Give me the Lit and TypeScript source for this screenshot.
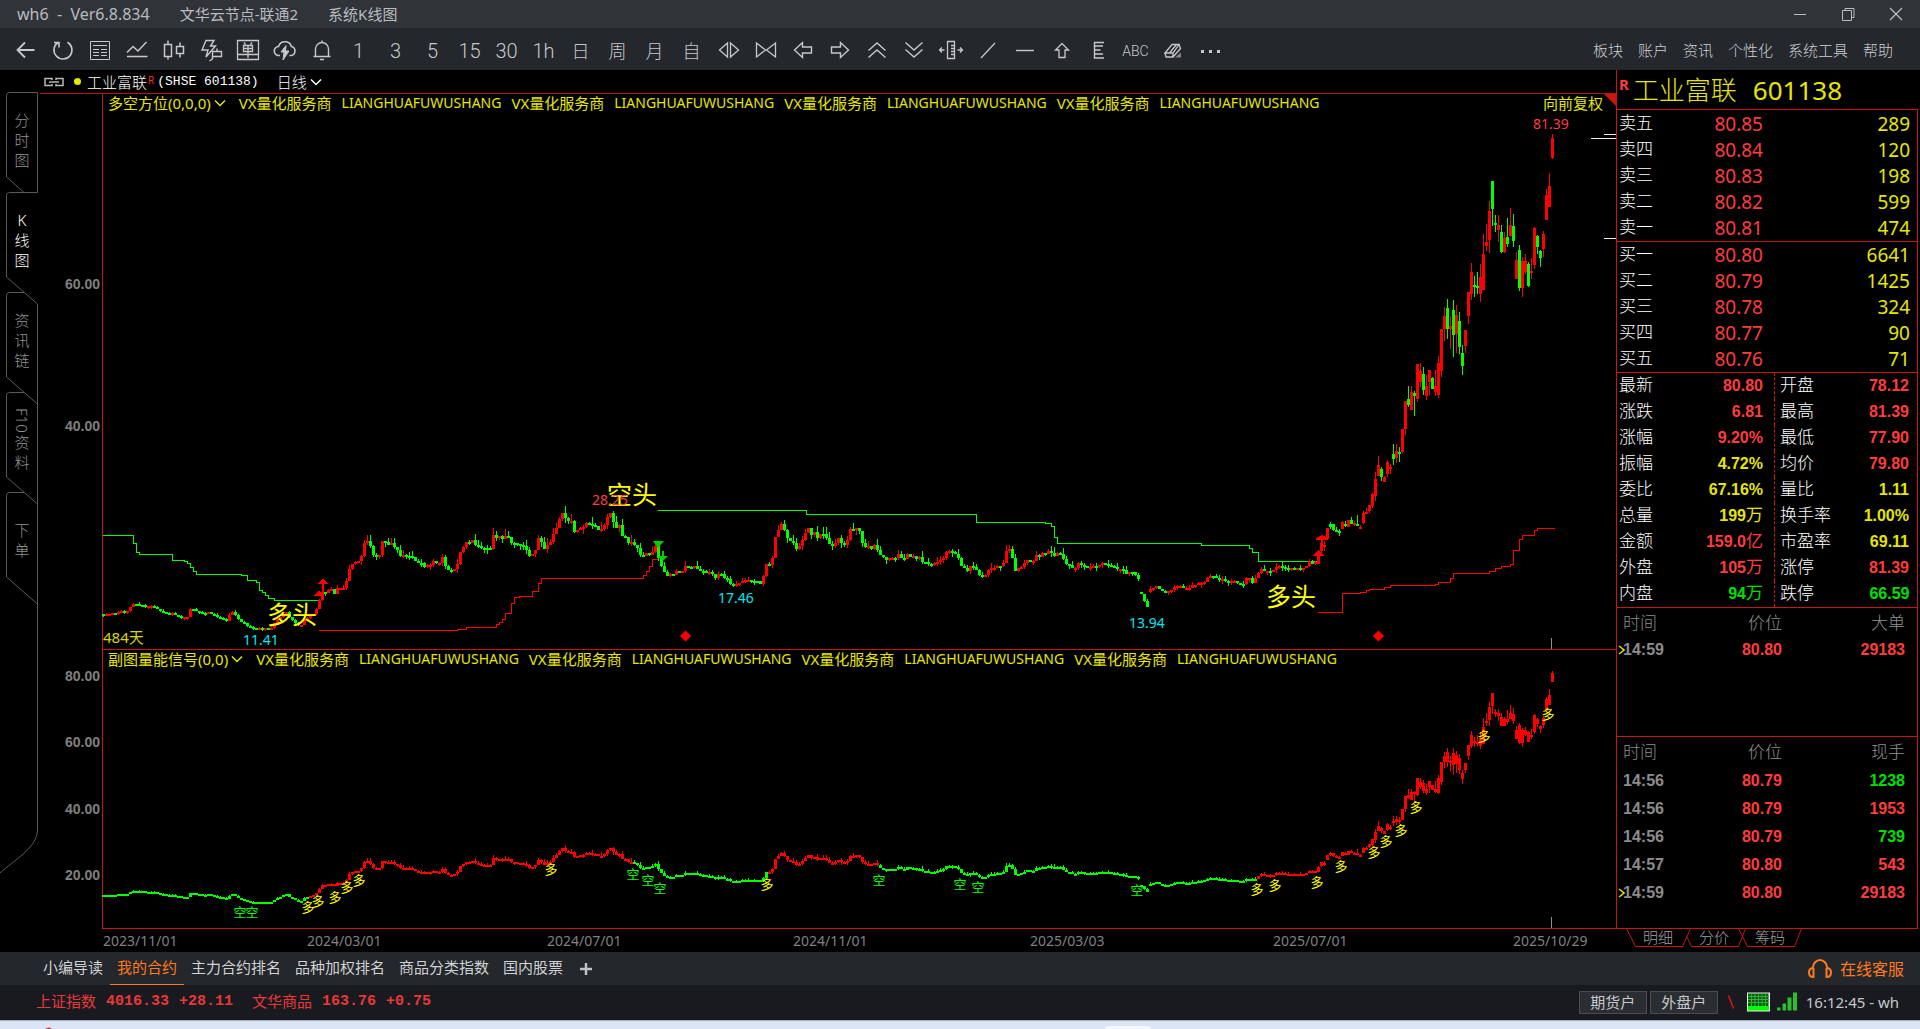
import { LitElement, html, svg, css, nothing } from "lit";
import { customElement, property } from "lit/decorators.js";
import { classMap } from "lit/directives/class-map.js";

/* ---------- chart data ---------- */

type Point = [number, number];
type Bar = { x: number; high: number; top: number; bottom: number; low: number; up: boolean };

/* Turning points of the daily price path, in plot coordinates. */
const PATH: Point[] = [
  [103, 614], [114, 614], [120, 611], [128, 610], [133, 603], [137, 604], [143, 605], [151, 606], [157, 609], [163, 613],
  [171, 613], [178, 616], [183, 618], [187, 617], [189, 608], [197, 612], [209, 613], [215, 616], [220, 618], [226, 621],
  [229, 615], [233, 612], [237, 619], [242, 623], [248, 626], [254, 628], [260, 628], [266, 629], [271, 629], [272, 624],
  [276, 620], [282, 615], [286, 613], [290, 618], [296, 625], [300, 626], [304, 620], [309, 617], [313, 614], [317, 608],
  [319, 600], [322, 593], [326, 593], [330, 588], [335, 594], [338, 586], [344, 588], [346, 582], [349, 570], [352, 562],
  [357, 561], [362, 555], [364, 543], [368, 538], [371, 547], [374, 558], [379, 553], [382, 540], [386, 540], [394, 547],
  [400, 557], [406, 556], [412, 555], [418, 563], [425, 568], [431, 562], [436, 563], [442, 558], [446, 566], [449, 575],
  [453, 568], [457, 563], [460, 550], [464, 545], [470, 542], [475, 545], [481, 550], [489, 549], [493, 538], [501, 536],
  [507, 538], [511, 543], [517, 546], [523, 548], [528, 555], [535, 552], [539, 537], [543, 547], [549, 546], [553, 532],
  [558, 523], [562, 515], [567, 518], [572, 525], [575, 532], [581, 529], [586, 523], [592, 526], [600, 529], [605, 520],
  [609, 512], [613, 525], [618, 527], [622, 533], [626, 542], [634, 542], [640, 555], [646, 553], [651, 555], [655, 547],
  [658, 557], [661, 567], [663, 573], [670, 576], [675, 573], [685, 568], [693, 567], [703, 570], [712, 575], [716, 580],
  [719, 573], [724, 577], [730, 583], [737, 585], [741, 582], [747, 578], [753, 582], [760, 583], [763, 575], [766, 564],
  [770, 563], [773, 557], [775, 540], [778, 527], [781, 525], [784, 532], [788, 539], [793, 540], [796, 548], [801, 545],
  [804, 537], [806, 527], [811, 532], [817, 535], [824, 537], [830, 543], [833, 546], [838, 541], [844, 543], [848, 537],
  [851, 530], [856, 528], [859, 532], [863, 542], [867, 549], [873, 547], [879, 552], [882, 559], [890, 559], [898, 556],
  [904, 559], [908, 556], [915, 557], [920, 559], [925, 564], [928, 566], [934, 562], [941, 559], [945, 553], [951, 552],
  [957, 557], [961, 566], [966, 570], [973, 567], [978, 572], [983, 576], [989, 570], [996, 567], [1002, 566], [1004, 557],
  [1007, 548], [1010, 553], [1013, 563], [1016, 573], [1020, 568], [1023, 562], [1032, 559], [1040, 555], [1046, 552],
  [1054, 553], [1062, 555], [1066, 564], [1072, 568], [1079, 564], [1087, 567], [1095, 566], [1100, 563], [1109, 567],
  [1117, 569], [1125, 573], [1135, 574], [1138, 577], [1141, 593], [1144, 602], [1147, 607], [1150, 589], [1157, 587],
  [1162, 590], [1168, 592], [1176, 587], [1190, 587], [1196, 583], [1202, 582], [1210, 577], [1218, 578], [1226, 581],
  [1238, 582], [1242, 584], [1248, 578], [1253, 583], [1257, 575], [1259, 570], [1267, 571], [1275, 568], [1281, 565],
  [1289, 567], [1296, 571], [1301, 567], [1309, 563], [1317, 564],
];

/* Days that open away from the previous close. */
const GAPS = new Set([1141, 1150]);

/* Latest bars: high, body top, body bottom, low, rising (1) or falling (0). */
const RECENT: [number, number, number, number, number][] = [
  [552, 554, 564, 564, 1], [543, 543, 551, 553, 1], [541, 545, 546, 551, 1], [528, 528, 539, 539, 1], [522, 524, 527, 529, 0],
  [524, 524, 530, 531, 0], [527, 530, 531, 532, 0], [529, 531, 532, 536, 0], [521, 522, 529, 529, 1], [521, 524, 526, 527, 0],
  [520, 520, 527, 527, 1], [517, 520, 524, 524, 0], [521, 523, 524, 526, 1], [515, 524, 525, 526, 0], [525, 527, 528, 529, 1],
  [511, 513, 523, 524, 1], [508, 512, 513, 514, 1], [505, 505, 511, 513, 1], [493, 494, 506, 508, 1], [472, 479, 496, 501, 1],
  [456, 465, 476, 476, 1], [467, 469, 477, 481, 0], [476, 477, 482, 482, 1], [460, 462, 474, 477, 1], [464, 467, 469, 474, 1],
  [444, 454, 459, 465, 0], [444, 451, 458, 463, 1], [447, 452, 454, 462, 0], [429, 429, 452, 453, 1], [401, 401, 429, 435, 1],
  [386, 399, 405, 407, 0], [386, 392, 410, 410, 1], [391, 393, 396, 416, 0], [364, 364, 399, 402, 1], [363, 371, 382, 387, 1],
  [367, 374, 390, 395, 0], [375, 386, 396, 400, 1], [370, 370, 382, 395, 1], [377, 378, 389, 389, 0], [370, 386, 392, 396, 1],
  [356, 363, 395, 398, 1], [329, 329, 371, 377, 1], [307, 316, 329, 341, 1], [299, 308, 329, 339, 0], [316, 326, 329, 349, 1],
  [300, 310, 335, 357, 0], [305, 315, 334, 353, 1], [312, 321, 347, 354, 0], [345, 353, 366, 375, 0], [330, 330, 346, 353, 1],
  [292, 292, 316, 324, 1], [263, 272, 294, 300, 1], [276, 285, 287, 297, 0], [272, 286, 288, 294, 0], [264, 277, 294, 302, 1],
  [234, 254, 290, 290, 1], [224, 242, 246, 251, 1], [201, 211, 240, 253, 1], [181, 181, 209, 226, 0], [215, 223, 225, 232, 0],
  [215, 225, 230, 242, 1], [225, 232, 252, 253, 0], [232, 238, 252, 253, 1], [218, 237, 244, 247, 0], [208, 225, 236, 237, 1],
  [214, 226, 241, 247, 0], [252, 260, 279, 279, 1], [245, 250, 288, 291, 0], [257, 261, 288, 297, 1], [254, 261, 272, 274, 1],
  [262, 264, 286, 287, 0], [258, 271, 273, 279, 1], [227, 228, 265, 269, 1], [235, 236, 247, 254, 0], [250, 251, 258, 267, 0],
  [231, 234, 249, 257, 1], [189, 195, 220, 220, 1], [173, 186, 207, 207, 1], [134, 138, 158, 159, 1],
];

const levelAt = (x: number): number => {
  for (let k = 1; k < PATH.length; k++) {
    if (x <= PATH[k][0]) {
      const [ax, ay] = PATH[k - 1];
      const [bx, by] = PATH[k];
      return ay + ((by - ay) * (x - ax)) / (bx - ax);
    }
  }
  return PATH[PATH.length - 1][1];
};

const noise = (n: number): number => {
  const v = Math.sin(n * 127.1 + 11.7) * 43758.5453;
  return v - Math.floor(v);
};

function buildBars(): Bar[] {
  const bars: Bar[] = [];
  let open = PATH[0][1];
  for (let i = 0; i < 405; i++) {
    const x = 103 + i * 3;
    const level = levelAt(x);
    const swing = Math.max(1, (632 - level) / 22);
    const close = level + (noise(i) - 0.5) * swing * 1.5;
    if (GAPS.has(x)) open = close + (close > open ? -2 : 3);
    const top = Math.round(Math.min(open, close));
    const bottom = Math.max(top + 2, Math.round(Math.max(open, close)));
    bars.push({
      x,
      top,
      bottom,
      high: Math.round(top - noise(i + 900) ** 2 * swing * 1.8),
      low: Math.round(bottom + noise(i + 1800) ** 2 * swing * 1.2),
      up: close < open,
    });
    open = close;
  }
  RECENT.forEach(([high, top, bottom, low, up], k) => {
    bars.push({ x: 1318 + k * 3, high, top, bottom: Math.max(bottom, top + 2), low, up: up === 1 });
  });
  return bars;
}

const BARS = buildBars();
const toLower = (y: number): number => Math.round(675 + (y - 143) * 0.468);
const LOWER_BARS = BARS.map((b) => {
  const top = toLower(b.top);
  return { ...b, high: toLower(b.high), top, bottom: Math.max(top + 2, toLower(b.bottom)), low: toLower(b.low) };
});
const isRising = (x: number): boolean => (x > 308 && x < 634) || (x > 767 && x < 878) || x > 1256;

const barPath = (bars: Bar[]): string =>
  bars
    .map((b) => `M${b.x} ${b.high}h1V${b.low}h-1zM${b.x - 1} ${b.top}h3V${b.bottom}h-3z`)
    .join("");

/* A step line: hold the level to x, then move to the next one. */
const stepPath = ([first, ...rest]: Point[]): string =>
  `M${first[0]} ${first[1]}` + rest.map(([x, y]) => `H${x}V${y}`).join("");

const GREEN_STEPS: Point[][] = [
  [[103, 535], [133, 543], [136, 552], [139, 554], [172, 560], [184, 561], [187, 563], [190, 567], [193, 571], [196, 574],
    [241, 575], [247, 580], [256, 582], [259, 590], [262, 592], [265, 595], [268, 598], [274, 600], [319, 600]],
  [[658, 510], [806, 514], [976, 522], [1045, 523], [1051, 526], [1054, 537], [1057, 543], [1201, 545], [1249, 548],
    [1252, 552], [1258, 561], [1318, 561]],
];
const RED_STEPS: Point[][] = [
  [[319, 630], [457, 629], [466, 627], [496, 624], [499, 622], [502, 619], [505, 613], [511, 603], [514, 597], [519, 596],
    [532, 591], [538, 583], [541, 578], [643, 575], [646, 571], [649, 566], [652, 559], [658, 559]],
  [[1318, 612], [1342, 593], [1360, 592], [1366, 590], [1369, 589], [1384, 587], [1390, 585], [1435, 584], [1438, 582],
    [1450, 578], [1453, 573], [1489, 571], [1495, 568], [1501, 566], [1510, 564], [1513, 550], [1519, 539], [1522, 535],
    [1534, 530], [1537, 528], [1555, 528]],
];

const LONG_MARKS: Point[] = [
  [308, 907], [318, 901], [335, 897], [347, 887], [359, 880], [551, 869], [767, 884], [1257, 889], [1275, 885], [1317, 882],
  [1341, 866], [1374, 852], [1386, 841], [1401, 830], [1416, 807], [1484, 736], [1548, 714],
];
const SHORT_MARKS: Point[] = [
  [240, 912], [252, 912], [633, 874], [648, 880], [660, 888], [879, 880], [960, 884], [978, 887], [1137, 890],
];

/* ---------- toolbar icons, 24 × 24 ---------- */

const icon = (body: unknown, w = 24) =>
  html`<svg class="icon" width=${w} height="24" viewBox="0 0 ${w} 24" aria-hidden="true">${body}</svg>`;

const TOOLS: { label: string; icon?: unknown; text?: string; small?: boolean; cjk?: boolean }[] = [
  { label: "返回", icon: icon(svg`<path d="M20.500 12H4M11 4.500L3.500 12l7.500 7.500" stroke-width="1.800"/>`) },
  { label: "刷新", icon: icon(svg`<path d="M7 4.500A9 9 0 1 0 16.500 4.200M3 4.500h5v5" stroke-width="1.600"/>`) },
  { label: "报价", icon: icon(svg`<path d="M2.500 3.500h19v18h-19zM5 7.500h14M5 11.500h6M13 11.500h6M5 14.500h6M13 14.500h6M5 17.500h6M13 17.500h6"/>`) },
  { label: "分时", icon: icon(svg`<path d="M2 14.500l6-6 5 4.500 8.500-9M2 18.500h20.500" stroke-width="1.500"/>`) },
  { label: "K线", icon: icon(svg`<path d="M2.500 6.500h7v12h-7zM6 2.500v4M6 18.500v3M14.500 8.500h7v7h-7zM18 4.500v4M18 15.500v4" stroke-width="1.500"/>`) },
  { label: "闪电下单", icon: icon(svg`<path d="M7 2.500h8l-3.500 5.500h5L7 19l2-7H3zM13.500 13.500h9v5h-9zM13.500 13.500v7.500l-3 2M18 10.500v3" stroke-width="1.400"/>`) },
  { label: "下单", icon: icon(svg`<path d="M1.500 2.500h21v19h-21zM8 4.500l1.500 2M16 4.500l-1.500 2M7.500 7.500h9v6h-9zM7.500 10.500h9M12 7.500v12.500M1.500 16.500h21" stroke-width="1.300"/>`) },
  { label: "云服务", icon: icon(svg`<path d="M7 17.500H6a4.500 4.500 0 0 1-.5-9A6.800 6.800 0 0 1 18.500 8.500a4.600 4.600 0 0 1-.5 9h-1.500" stroke-width="1.600"/><path d="M13 7.500L8 14h3l-1 8 6-9h-3.500z" fill="currentColor"/>`) },
  { label: "预警", icon: icon(svg`<path d="M3.500 18.500h17M5.500 18V11a6.500 6.500 0 0 1 13 0v7M12 4.500V2.500M10 21.500h4" stroke-width="1.400"/>`) },
  { label: "1分钟", text: "1" },
  { label: "3分钟", text: "3" },
  { label: "5分钟", text: "5" },
  { label: "15分钟", text: "15" },
  { label: "30分钟", text: "30" },
  { label: "1小时", text: "1h" },
  { label: "日线", text: "日", cjk: true },
  { label: "周线", text: "周", cjk: true },
  { label: "月线", text: "月", cjk: true },
  { label: "自定义周期", text: "自", cjk: true },
  { label: "展开", icon: icon(svg`<path d="M10.500 5v14L2.500 12zM13.500 5v14l8-7z" stroke-width="1.300"/>`) },
  { label: "压缩", icon: icon(svg`<path d="M2.500 5v14l9-7zM21.500 5v14l-9-7z" stroke-width="1.300"/>`) },
  { label: "左移", icon: icon(svg`<path d="M3.500 12l8-7.500V9h9v6h-9v4.500z" stroke-width="1.400"/>`) },
  { label: "右移", icon: icon(svg`<path d="M20.500 12l-8-7.500V9h-9v6h9v4.500z" stroke-width="1.400"/>`) },
  { label: "放大", icon: icon(svg`<path d="M3.500 12.500L12 5l8.500 7.500M3.500 19.500L12 12l8.500 7.500" stroke-width="1.400"/>`) },
  { label: "缩小", icon: icon(svg`<path d="M3.500 4.500L12 12l8.500-7.500M3.500 11.500L12 19l8.500-7.500" stroke-width="1.400"/>`) },
  { label: "区间", icon: icon(svg`<path d="M9.500 3.500h7v17h-7zM13 7.500h3M13 10.500h3M13 13.500h3M13 16.500h3M1.500 12h5M19.500 12h5M4 9.500L1.500 12 4 14.500M22 9.500l2.500 2.500L22 14.500" stroke-width="1.300"/>`, 26) },
  { label: "画线", icon: icon(svg`<path d="M5 20L19 5" stroke-width="1.300"/>`) },
  { label: "水平线", icon: icon(svg`<path d="M3 12.500h18" stroke-width="1.400"/>`) },
  { label: "箭头", icon: icon(svg`<path d="M12 5.500l6.500 6.500H15v7.500H9V12H5.500z" stroke-width="1.300"/>`) },
  { label: "标尺", icon: icon(svg`<path d="M17 4.500H7.500v15.500H17M8 8h8M8 12h5.500M8 16h8" stroke-width="1.400"/>`) },
  { label: "文字", text: "ABC", small: true },
  { label: "擦除", icon: icon(svg`<path d="M4 15l7-8.500h7L12 15zM4 15l1 4h7l7.500-8.500L18 6.500M12 15v4M8.500 15l7-8.500" stroke-width="1.300"/><path d="M14 19.500h6v-5z" fill="currentColor" stroke="none" opacity=".6"/>`) },
  { label: "更多", icon: icon(svg`<path d="M3 13.500h3M11 13.500h3M19 13.500h3" stroke-width="3"/>`) },
];

const chevron = html`<svg class="chevron" width="12" height="8" viewBox="0 0 12 8" aria-hidden="true"><path d="M1 1.500l5 5 5-5"/></svg>`;

const latin = "LIANGHUAFUWUSHANG";
const vendor = "VX量化服务商";

/* ---------- chart area ---------- */

@customElement("kline-chart")
export class KlineChart extends LitElement {
  static styles = css`
    :host { display: block; min-width: 0; color: #e6e600; font-family: "Noto Sans", "Noto Sans CJK SC", sans-serif; }
    .head { display: flex; align-items: center; height: 23px; padding-left: 4px; border-bottom: 1px solid #b9130b; color: #fff; font-size: 15px; font-weight: 300; white-space: nowrap; }
    .dot { width: 7px; height: 7px; margin: 0 6px 0 10px; border-radius: 50%; background: #e6e600; }
    .mark { align-self: flex-start; margin: 3px 3px 0 1px; color: #f03030; font-size: 10px; font-weight: 400; line-height: 14px; }
    .code { margin-right: 18px; font-family: "Liberation Mono", monospace; font-size: 13px; }
    .drop { display: inline-flex; align-items: center; gap: 3px; padding: 0; border: 0; background: none; color: inherit; font-family: inherit; font-size: 15px; font-weight: inherit; line-height: 20px; }
    .title .drop { margin-right: 3px; }
    .chevron { flex: none; fill: none; stroke: currentColor; stroke-width: 1.5; }
    .pane { display: grid; }
    .pane > * { grid-area: 1 / 1; }
    .plot { display: block; width: 100%; height: auto; }
    .title { display: flex; align-items: center; align-self: start; gap: 10px; height: 18px; padding-left: 68px; font-size: 15px; white-space: nowrap; overflow: hidden; z-index: 1; line-height: 18px; }
    .latin { font-size: 14px; }
    .note { margin-left: auto; padding-right: 13px; }
    .frame { stroke: #c8170e; fill: none; shape-rendering: crispEdges; }
    .axis { fill: #808080; font: bold 14px "Liberation Sans", sans-serif; text-anchor: end; }
    .up { fill: #f00; shape-rendering: crispEdges; }
    .down { fill: #0f0; shape-rendering: crispEdges; }
    .res { fill: none; stroke: #0f0; shape-rendering: crispEdges; }
    .sup { fill: none; stroke: #f00; shape-rendering: crispEdges; }
    .sell { fill: #00d000; }
    .white { stroke: #eee; shape-rendering: crispEdges; }
    .tick { stroke: #909090; shape-rendering: crispEdges; }
    .corner { fill: #c8170e; }
    .value { font-size: 14px; text-anchor: middle; }
    .cyan { fill: #00e6f0; }
    .red { fill: #ff3c3c; }
    .days { font-size: 15px; fill: #d8d800; }
    .side { font-size: 25px; text-anchor: middle; fill: #ff0; }
    .long { font-size: 13px; text-anchor: middle; fill: #ff0; }
    .short { font-size: 13px; text-anchor: middle; fill: #0f0; }
    .dates { display: grid; grid-template-columns: 204fr 240fr 246fr 237fr 243fr 240fr 103fr; height: 23px; padding-left: 63px; color: #808080; font-size: 14px; line-height: 23px; white-space: nowrap; }
  `;

  private titleRow(name: string, note?: string) {
    return html`<div class="title">
      <button class="drop" type="button">${name}${chevron}</button>
      ${[0, 1, 2, 3].map(() => html`<span>${vendor}</span><span class="latin">${latin}</span>`)}
      ${note ? html`<span class="note">${note}</span>` : nothing}
    </div>`;
  }

  render() {
    return html`
      <div class="head">
        <svg width="20" height="10" viewBox="0 0 20 10" aria-hidden="true">
          <path d="M8 3V1.500H1v7h7V7M12 3V1.500h7v7h-7V7M5 5h10" fill="none" stroke="#b8b8b8" stroke-width="1.500" />
        </svg>
        <span class="dot"></span>
        <span>工业富联</span><span class="mark">R</span>
        <span class="code">(SHSE 601138)</span>
        <button class="drop" type="button">日线${chevron}</button>
      </div>
      <div class="pane">
        <svg class="plot" viewBox="40 94 1576 556" role="img" aria-label="日线">
          <path class="frame" d="M102.500 94V649.500M102 649.500H1616" />
          <text class="axis" x="100" y="289">60.00</text>
          <text class="axis" x="100" y="431">40.00</text>
          ${GREEN_STEPS.map((s) => svg`<path class="res" d=${stepPath(s)} />`)}
          ${RED_STEPS.map((s) => svg`<path class="sup" d=${stepPath(s)} />`)}
          <path class="up" d=${barPath(BARS.filter((b) => b.up))} />
          <path class="down" d=${barPath(BARS.filter((b) => !b.up))} />
          <path class="up" d="M323 579l5 4v1h-10v-1zM322 583h2v12h-2zM319 590l5 6h-10zM1322 535l6 3v2h-12v-2zM1321 538h2v10h-2zM1318 550l6 6h-12z" />
          <path class="sell" d="M653 541h11l-6 7zM662 551h2v5h4l-5 5-5-5h4z" />
          <path d="M685.500 630.500l5.500 5.500-5.500 5.500-5.500-5.500zM1378.500 630.500l5.500 5.500-5.500 5.500-5.500-5.500z" fill="#f00" />
          <path class="white" d="M1604 134.500h12M1591 138.500h25M1604 238.500h12" />
          <path class="tick" d="M1551.500 638v11" />
          <path class="corner" d="M1604 94h12v12z" />
          <text class="side" x="292" y="624">多头</text>
          <text class="side" x="632" y="504">空头</text>
          <text class="side" x="1291" y="606">多头</text>
          <text class="value red" x="610" y="505">28.25</text>
          <text class="value red" x="1551" y="129">81.39</text>
          <text class="value cyan" x="261" y="645">11.41</text>
          <text class="value cyan" x="736" y="603">17.46</text>
          <text class="value cyan" x="1147" y="628">13.94</text>
          <text class="days" x="103" y="643">484天</text>
        </svg>
        ${this.titleRow("多空方位(0,0,0)", "向前复权")}
      </div>
      <div class="pane">
        <svg class="plot" viewBox="40 650 1576 279" role="img" aria-label="副图量能信号">
          <path class="frame" d="M102.500 650V928.500M102 928.500H1616" />
          ${["80.00", "60.00", "40.00", "20.00"].map(
            (t, i) => svg`<text class="axis" x="100" y=${681 + Math.round(i * 66.3)}>${t}</text>`
          )}
          <path class="up" d=${barPath(LOWER_BARS.filter((b) => isRising(b.x)))} />
          <path class="down" d=${barPath(LOWER_BARS.filter((b) => !isRising(b.x)))} />
          ${LONG_MARKS.map(([x, y]) => svg`<text class="long" x=${x} y=${y + 5}>多</text>`)}
          ${SHORT_MARKS.map(([x, y]) => svg`<text class="short" x=${x} y=${y + 5}>空</text>`)}
          <path class="tick" d="M1551.500 917v11" />
        </svg>
        ${this.titleRow("副图量能信号(0,0)")}
      </div>
      <div class="dates">
        ${["2023/11/01", "2024/03/01", "2024/07/01", "2024/11/01", "2025/03/03", "2025/07/01", "2025/10/29"].map(
          (d) => html`<span>${d}</span>`
        )}
      </div>
    `;
  }
}

/* ---------- quote panel ---------- */

type Cell = [label: string, value: string, tone: string, unit?: string];

const ASKS = [["卖五", "80.85", "289"], ["卖四", "80.84", "120"], ["卖三", "80.83", "198"], ["卖二", "80.82", "599"], ["卖一", "80.81", "474"]];
const BIDS = [["买一", "80.80", "6641"], ["买二", "80.79", "1425"], ["买三", "80.78", "324"], ["买四", "80.77", "90"], ["买五", "80.76", "71"]];
const LEFT: Cell[] = [
  ["最新", "80.80", "red"], ["涨跌", "6.81", "red"], ["涨幅", "9.20%", "red"], ["振幅", "4.72%", "yellow"], ["委比", "67.16%", "yellow"],
  ["总量", "199", "yellow", "万"], ["金额", "159.0", "red", "亿"], ["外盘", "105", "red", "万"], ["内盘", "94", "green", "万"],
];
const RIGHT: Cell[] = [
  ["开盘", "78.12", "red"], ["最高", "81.39", "red"], ["最低", "77.90", "red"], ["均价", "79.80", "red"], ["量比", "1.11", "yellow"],
  ["换手率", "1.00%", "yellow"], ["市盈率", "69.11", "yellow"], ["涨停", "81.39", "red"], ["跌停", "66.59", "green"],
];
const TRADES: [string, string, string, string][] = [
  ["14:56", "80.79", "1238", "green"], ["14:56", "80.79", "1953", "red"], ["14:56", "80.79", "739", "green"],
  ["14:57", "80.80", "543", "red"], ["14:59", "80.80", "29183", "red"],
];

@customElement("quote-panel")
export class QuotePanel extends LitElement {
  static styles = css`
    :host { display: block; color: #fff; font-family: "Noto Sans", "Noto Sans CJK SC", sans-serif; }
    .frame { border-left: 1px solid #c8170e; }
    .head { display: flex; align-items: center; height: 38px; padding: 1px 0 0 2px; margin: 0; color: #e6e600; font-size: 26px; font-weight: 300; line-height: 38px; white-space: nowrap; }
    .mark { align-self: flex-start; margin: 3px 4px 0 0; color: #ff3c3c; font-size: 15px; font-weight: 700; line-height: 20px; }
    .code { margin-left: 16px; font-weight: 400; }
    .body { margin-right: 2px; border-top: 1px solid #c8170e; border-right: 1px solid #c8170e; }
    table { width: 100%; border-collapse: collapse; table-layout: fixed; }
    th, td { padding: 0; font-weight: 400; text-align: left; vertical-align: middle; white-space: nowrap; }
    .block { border-bottom: 1px solid #c8170e; }
    .asks { padding-top: 1px; }
    .orders tr, .facts tr { height: 26px; }
    .orders th, .facts th { padding-bottom: 2px; font-size: 17px; font-weight: 300; line-height: 20px; }
    .orders th { width: 20%; padding-left: 2px; }
    .orders td { width: 28%; font-size: 19px; line-height: 20px; text-align: right; }
    .orders td:last-child { width: auto; padding-right: 7px; }
    .facts { display: grid; grid-template-columns: 157fr 143fr; }
    .facts table + table { border-left: 1px dashed #c8170e; }
    .facts th { padding-left: 2px; }
    .facts table + table th { padding-left: 5px; }
    .facts td { padding-right: 11px; font: bold 16px/20px "Liberation Sans", "Noto Sans CJK SC", sans-serif; text-align: right; }
    .facts table + table td { padding-right: 7px; }
    .unit { font-weight: 400; font-size: 17px; line-height: 1px; }
    .red { color: #ff3c3c; }
    .green { color: #00e000; }
    .yellow { color: #e6e600; }
    .big { min-height: 128px; }
    .all { min-height: 191px; }
    .tape thead tr { height: 30px; }
    .tape thead th { color: #909090; font-size: 17px; font-weight: 300; line-height: 24px; }
    .tape tbody tr { height: 28px; }
    .big tbody tr { height: 24px; }
    .tape td { font: bold 16px/20px "Liberation Sans", sans-serif; }
    .tape th:first-child, .tape td:first-child { width: 30%; padding-left: 6px; color: #8c8c8c; }
    .tape th:nth-child(2), .tape td:nth-child(2) { width: 23%; text-align: right; }
    .tape th:last-child, .tape td:last-child { padding-right: 12px; text-align: right; }
    .time { position: relative; }
    .last { position: absolute; left: -5px; top: 5px; fill: none; stroke: #e6e600; stroke-width: 1.5; }
    .tabs { position: relative; display: flex; height: 23px; padding-left: 14px; }
    .edge { position: absolute; left: 0; top: -1px; fill: none; stroke: #c8170e; }
    .tab { position: relative; width: 56px; height: 16px; padding: 0; border: 0; background: none; color: #a0a0a0; font-family: inherit; font-size: 15px; font-weight: 300; line-height: 16px; }
  `;

  private orders(rows: string[][]) {
    return html`<table class="orders">
      <tbody>
        ${rows.map(([l, p, v]) => html`<tr><th scope="row">${l}</th><td class="red">${p}</td><td class="yellow">${v}</td></tr>`)}
      </tbody>
    </table>`;
  }

  private facts(rows: Cell[]) {
    return html`<table>
      <tbody>
        ${rows.map(
          ([l, v, tone, unit]) => html`<tr><th scope="row">${l}</th><td class=${tone}>${v}${unit ? html`<span class="unit">${unit}</span>` : nothing}</td></tr>`
        )}
      </tbody>
    </table>`;
  }

  private tape(last: string, rows: [string, string, string, string][]) {
    return html`<table class="tape">
      <thead><tr><th scope="col">时间</th><th scope="col">价位</th><th scope="col">${last}</th></tr></thead>
      <tbody>
        ${rows.map(
          ([t, p, v, tone], i) => html`<tr>
            <td><div class="time">${i === rows.length - 1
              ? html`<svg class="last" width="7" height="10" viewBox="0 0 7 10" aria-hidden="true"><path d="M1 1l5 4-5 4" /></svg>`
              : nothing}${t}</div></td>
            <td class="red">${p}</td>
            <td class=${tone}>${v}</td>
          </tr>`
        )}
      </tbody>
    </table>`;
  }

  render() {
    return html`
      <div class="frame">
        <h1 class="head"><span class="mark">R</span>工业富联<span class="code">601138</span></h1>
        <div class="body">
          <div class="block asks">${this.orders(ASKS)}</div>
          <div class="block">${this.orders(BIDS)}</div>
          <div class="block facts">${this.facts(LEFT)}${this.facts(RIGHT)}</div>
          <div class="block big">${this.tape("大单", [TRADES[4]])}</div>
          <div class="block all">${this.tape("现手", TRADES)}</div>
        </div>
      </div>
      <div class="tabs">
        <svg class="edge" width="190" height="20" viewBox="0 0 190 20" aria-hidden="true">
          <path d="M10.500 .5l9 18h47l8-18M71 9l4.500 9.500h47l7-18M122.500 .5l9 18h47l7-18" />
        </svg>
        ${["明细", "分价", "筹码"].map((t) => html`<button class="tab" type="button">${t}</button>`)}
      </div>
    `;
  }
}

/* ---------- side tabs ---------- */

@customElement("side-tabs")
export class SideTabs extends LitElement {
  static styles = css`
    :host { display: block; }
    nav { position: relative; display: flex; flex-direction: column; width: 40px; padding-top: 22px; }
    .outline { position: absolute; left: 0; top: 0; fill: none; stroke: #5a5a5a; }
    .tab { position: relative; display: flex; flex-direction: column; align-items: center; justify-content: center; width: 32px; height: 100px; margin-left: 6px; padding: 0 0 4px; border: 0; background: none; color: #949494; font-family: "Noto Sans", "Noto Sans CJK SC", sans-serif; font-size: 15px; font-weight: 300; line-height: 20px; }
    .active { color: #fff; }
    .turned { writing-mode: vertical-rl; }
  `;

  render() {
    const tabs = [["分", "时", "图"], ["K", "线", "图"], ["资", "讯", "链"], ["F10", "资", "料"], ["下", "单"]];
    return html`<nav>
      <svg class="outline" width="40" height="810" viewBox="0 70 40 810" aria-hidden="true">
        <path d="M24 192.500L6.500 177V95.500Q6.500 92.500 9.500 92.500H37.500V192.500H9.500Q6.500 192.500 6.500 195.500V277L37.500 304V830C37 848 14 860 0 873M24 292.500H9.500Q6.500 292.500 6.500 295.500V377L37.500 404M24 392.500H9.500Q6.500 392.500 6.500 395.500V477L37.500 504M24 492.500H9.500Q6.500 492.500 6.500 495.500V577L37.500 604" />
      </svg>
      ${tabs.map(
        (chars, i) => html`<button type="button" class=${classMap({ tab: true, active: i === 1 })}>
          ${chars.map((c) => html`<span class=${classMap({ turned: c.length > 1 })}>${c}</span>`)}
        </button>`
      )}
    </nav>`;
  }
}

/* ---------- shell ---------- */

@customElement("app-root")
export class AppRoot extends LitElement {
  @property() clock = "16:12:45";

  static styles = css`
    :host { display: flex; flex-direction: column; min-height: 100vh; background: #000; color: #b9bcc0; font-family: "Noto Sans", "Noto Sans CJK SC", sans-serif; font-size: 15px; }
    button, a { color: inherit; font: inherit; text-decoration: none; }
    button { padding: 0; border: 0; background: none; }
    .titlebar { display: flex; align-items: center; gap: 30px; height: 28px; padding-left: 17px; background: #303338; line-height: 26px; white-space: nowrap; }
    .version { font-size: 16px; }
    .controls { display: flex; margin-left: auto; }
    .controls button { width: 48px; height: 28px; }
    .controls svg, .icon { display: block; margin: 0 auto; fill: none; stroke: currentColor; }
    .toolbar { display: flex; align-items: center; height: 40px; padding: 2px 27px 0 7px; background: #24272b; }
    .tool { flex: none; width: 37px; height: 36px; color: #c6c8ca; font-family: Roboto, sans-serif; font-size: 20px; font-weight: 300; line-height: 36px; }
    .digits, .small { padding-top: 1px; }
    .small { font-size: 14px; }
    .cjk { font-family: "Noto Sans CJK SC", sans-serif; font-size: 18px; }
    .menu { display: flex; gap: 15px; margin-left: auto; color: #cdd0d4; font-weight: 300; line-height: 20px; white-space: nowrap; }
    .main { display: grid; grid-template-columns: 40px minmax(0, 1fr) 304px; flex: 1; align-items: start; }
    .groups { display: flex; align-items: center; height: 33px; padding: 0 16px 0 36px; background: #24272b; color: #d0d2d4; white-space: nowrap; }
    .group { height: 33px; padding: 0 7px 2px; border-bottom: 1px solid transparent; box-sizing: border-box; line-height: 30px; }
    .current { color: #ff7a1a; border-bottom-color: #ff7a1a; }
    .add { width: 14px; height: 14px; margin-left: 9px; }
    .add svg { display: block; }
    .service { display: flex; align-items: center; gap: 8px; margin-left: auto; color: #ff7a1a; font-size: 16px; line-height: 32px; }
    .status { display: flex; align-items: center; height: 34px; padding: 0 21px 1px 36px; background: #191a20; color: #c6c8ca; white-space: nowrap; }
    .index { display: flex; align-items: center; gap: 10px; margin-right: 19px; color: #e83838; font: bold 15px/20px "Liberation Mono", monospace; }
    .index span { padding-bottom: 2px; font-family: "Noto Sans CJK SC", sans-serif; font-weight: 400; }
    .accounts { display: flex; gap: 3px; margin-left: auto; }
    .accounts button { width: 68px; height: 23px; border: 1px solid #494c51; background: #2a2e33; line-height: 20px; }
    .strip { height: 8px; border-top: 1px solid #a9b0bd; background: #dbe5f6; overflow: hidden; }
    .strip svg { display: block; width: 100%; height: 8px; }
  `;

  render() {
    return html`
      <header>
        <div class="titlebar">
          <span class="version">wh6&nbsp; -&nbsp; Ver6.8.834</span><span>文华云节点-联通2</span><span>系统K线图</span>
          <div class="controls">
            <button type="button" aria-label="最小化"><svg width="14" height="14" viewBox="0 0 14 14"><path d="M1 7.500h12" /></svg></button>
            <button type="button" aria-label="还原"><svg width="14" height="14" viewBox="0 0 14 14"><path d="M1.500 3.500h9v10h-9zM4 3.500v-2h9v9h-2.500" /></svg></button>
            <button type="button" aria-label="关闭"><svg width="14" height="14" viewBox="0 0 14 14"><path d="M1 1l12 12M13 1L1 13" stroke-width="1.300" /></svg></button>
          </div>
        </div>
        <div class="toolbar">
          ${TOOLS.map(
            (t) => html`<button
              type="button"
              class=${classMap({ tool: true, small: !!t.small, cjk: !!t.cjk, digits: !!t.text && !t.cjk && !t.small })}
              aria-label=${t.label}
            >${t.icon ?? t.text}</button>`
          )}
          <nav class="menu">
            ${["板块", "账户", "资讯", "个性化", "系统工具", "帮助"].map((m) => html`<a href="#">${m}</a>`)}
          </nav>
        </div>
      </header>
      <main class="main">
        <side-tabs></side-tabs>
        <kline-chart></kline-chart>
        <quote-panel></quote-panel>
      </main>
      <footer>
        <div class="groups">
          ${["小编导读", "我的合约", "主力合约排名", "品种加权排名", "商品分类指数", "国内股票"].map(
            (g, i) => html`<button type="button" class=${classMap({ group: true, current: i === 1 })}>${g}</button>`
          )}
          <button class="add" type="button" aria-label="添加"><svg width="14" height="14" viewBox="0 0 14 14"><path d="M7 1v12M1 7h12" stroke="#c0c2c4" stroke-width="2.500" /></svg></button>
          <a class="service" href="#">
            <svg width="24" height="20" viewBox="0 0 24 20" aria-hidden="true">
              <path d="M5 9V8.500a7 7.500 0 0 1 14 0V9M5.500 9v9Q1 18 1 13.500T5.500 9M18.500 9v9Q23 18 23 13.500T18.500 9" fill="none" stroke="#ff7a1a" stroke-width="2" />
            </svg>在线客服
          </a>
        </div>
        <div class="status">
          <div class="index"><span>上证指数</span>4016.33<b>+28.11</b></div>
          <div class="index"><span>文华商品</span>163.76<b>+0.75</b></div>
          <div class="accounts"><button type="button">期货户</button><button type="button">外盘户</button></div>
          <svg width="88" height="22" viewBox="0 0 88 22" aria-hidden="true">
            <path d="M10.500 4.500l5 13" stroke="#e81010" stroke-width="1.500" />
            <path d="M29 1.500h23v19H29z" fill="#e6efe6" />
            <path d="M30 2.500h20.500v13H30z" fill="#0a5a10" />
            <path d="M30 5.500h21M30 8.500h21M30 11.500h21M33.500 2.500v13M37 2.500v13M40.500 2.500v13M44 2.500v13M47.500 2.500v13" stroke="#2fae35" />
            <path d="M30 15h21v4.500H30z" fill="#0f0" />
            <path d="M59 16.500h3.500v3H59zM64.500 12.500H68v7h-3.500zM69.500 6.500h4v13h-4zM75 1.500h4v18h-4z" fill="#2bbf2f" />
          </svg>
          <span>${this.clock} - wh</span>
        </div>
        <div class="strip">
          <svg viewBox="0 0 1920 8" preserveAspectRatio="none" aria-hidden="true"><path d="M45 8q4-3 7 0z" fill="#c8342c" /><path d="M1105 8v-1q1-2 4-2h38q3 0 4 2v1z" fill="#f6f9ff" /></svg>
        </div>
      </footer>
    `;
  }
}
